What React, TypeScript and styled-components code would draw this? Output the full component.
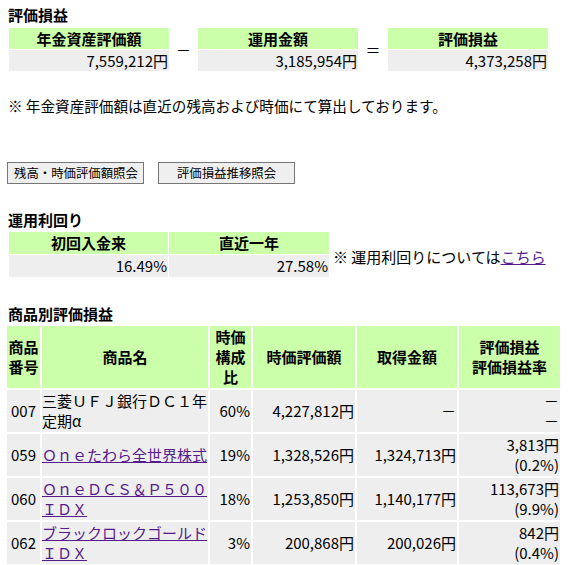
import React from "react";
import styled, { createGlobalStyle } from "styled-components";

const GlobalStyle = createGlobalStyle`
  html, body {
    margin: 0;
    padding: 0;
    background: #ffffff;
  }
  body {
    font-family: "Noto Sans CJK JP", "Noto Sans", sans-serif;
    font-size: 15px;
    color: #000000;
  }
`;

const GREEN = "#ccffaa";
const GRAY = "#eeeeee";

const Page = styled.div`
  padding: 5px 0 0 8px;
  width: 562px;
  box-sizing: border-box;
`;

const SectionTitle = styled.h2<{ $gap?: number }>`
  margin: ${(p) => p.$gap ?? 0}px 0 0 0;
  font-size: 15px;
  font-weight: bold;
  line-height: 20px;
`;

const FormulaTable = styled.table`
  border-collapse: separate;
  border-spacing: 1px;
  table-layout: fixed;
  margin-top: 2px;
`;

const HeadCell = styled.th<{ $w?: number }>`
  background: ${GREEN};
  font-weight: bold;
  text-align: center;
  padding: 0 1px;
  line-height: 21px;
  width: ${(p) => (p.$w ? `${p.$w - 2}px` : "auto")};
`;

const ValueCell = styled.td`
  background: ${GRAY};
  text-align: right;
  padding: 0 1px;
  line-height: 21px;
`;

const OpCell = styled.td<{ $w: number }>`
  width: ${(p) => p.$w}px;
  padding: 0;
  text-align: center;
  vertical-align: middle;
`;

const Note = styled.p`
  margin: 24px 0 0 0;
  font-size: 14.6px;
  line-height: 20px;
`;

const ButtonRow = styled.div`
  display: flex;
  gap: 14px;
  margin: 46px 0 0 -1px;
`;

const Button = styled.button`
  width: 137px;
  height: 22px;
  padding: 0 6px;
  box-sizing: border-box;
  background: #efefef;
  border: 1px solid #767676;
  border-radius: 0;
  font-family: "Noto Sans CJK JP", sans-serif;
  font-size: 12.4px;
  color: #000;
  line-height: 18px;
  white-space: nowrap;
`;

const YieldRow = styled.div`
  display: flex;
  align-items: center;
  gap: 3px;
  margin-top: 1px;
`;

const YieldTable = styled.table`
  border-collapse: separate;
  border-spacing: 1px;
  table-layout: fixed;
`;

const YieldHead = styled(HeadCell)`
  line-height: 22px;
`;

const YieldValue = styled(ValueCell)`
  line-height: 22px;
`;

const YieldNote = styled.span`
  line-height: 20px;
  margin-top: 4px;
`;

const Link = styled.a`
  color: #551a8b;
  text-decoration: underline;
`;

const ProductTable = styled.table`
  border-collapse: separate;
  border-spacing: 2px;
  table-layout: fixed;
  margin: 0 0 0 -3px;
`;

const PHead = styled.th<{ $w: number }>`
  width: ${(p) => p.$w - 2}px;
  background: ${GREEN};
  font-weight: bold;
  text-align: center;
  vertical-align: middle;
  padding: 1px;
  line-height: 20px;
`;

const PCell = styled.td<{ $align?: "left" | "right" | "center" }>`
  background: ${GRAY};
  text-align: ${(p) => p.$align ?? "right"};
  vertical-align: middle;
  padding: ${(p) => (p.$align === "left" ? "1px 0" : "1px")};
  line-height: 20px;
  word-break: break-all;
`;

type Product = {
  code: string;
  name: string;
  link: boolean;
  ratio: string;
  value: string;
  cost: string;
  gain: string;
  rate: string;
};

const products: Product[] = [
  {
    code: "007",
    name: "三菱ＵＦＪ銀行ＤＣ１年定期α",
    link: false,
    ratio: "60%",
    value: "4,227,812円",
    cost: "－",
    gain: "－",
    rate: "－",
  },
  {
    code: "059",
    name: "Ｏｎｅたわら全世界株式",
    link: true,
    ratio: "19%",
    value: "1,328,526円",
    cost: "1,324,713円",
    gain: "3,813円",
    rate: "(0.2%)",
  },
  {
    code: "060",
    name: "ＯｎｅＤＣＳ＆Ｐ５００ＩＤＸ",
    link: true,
    ratio: "18%",
    value: "1,253,850円",
    cost: "1,140,177円",
    gain: "113,673円",
    rate: "(9.9%)",
  },
  {
    code: "062",
    name: "ブラックロックゴールドＩＤＸ",
    link: true,
    ratio: "3%",
    value: "200,868円",
    cost: "200,026円",
    gain: "842円",
    rate: "(0.4%)",
  },
];

export default function App() {
  return (
    <>
      <GlobalStyle />
      <Page>
        <SectionTitle>評価損益</SectionTitle>
        <FormulaTable>
          <tbody>
            <tr>
              <HeadCell $w={160}>年金資産評価額</HeadCell>
              <OpCell $w={27} rowSpan={2}>－</OpCell>
              <HeadCell $w={160}>運用金額</HeadCell>
              <OpCell $w={28} rowSpan={2}>＝</OpCell>
              <HeadCell $w={160}>評価損益</HeadCell>
            </tr>
            <tr>
              <ValueCell>7,559,212円</ValueCell>
              <ValueCell>3,185,954円</ValueCell>
              <ValueCell>4,373,258円</ValueCell>
            </tr>
          </tbody>
        </FormulaTable>

        <Note>※ 年金資産評価額は直近の残高および時価にて算出しております。</Note>

        <ButtonRow>
          <Button type="button">残高・時価評価額照会</Button>
          <Button type="button">評価損益推移照会</Button>
        </ButtonRow>

        <SectionTitle $gap={26}>運用利回り</SectionTitle>
        <YieldRow>
          <YieldTable>
            <tbody>
              <tr>
                <YieldHead $w={159}>初回入金来</YieldHead>
                <YieldHead $w={160}>直近一年</YieldHead>
              </tr>
              <tr>
                <YieldValue>16.49%</YieldValue>
                <YieldValue>27.58%</YieldValue>
              </tr>
            </tbody>
          </YieldTable>
          <YieldNote>
            ※ 運用利回りについては<Link href="#">こちら</Link>
          </YieldNote>
        </YieldRow>

        <SectionTitle $gap={26}>商品別評価損益</SectionTitle>
        <ProductTable>
          <thead>
            <tr>
              <PHead $w={33}>商品番号</PHead>
              <PHead $w={166}>商品名</PHead>
              <PHead $w={41}>時価構成比</PHead>
              <PHead $w={102}>時価評価額</PHead>
              <PHead $w={100}>取得金額</PHead>
              <PHead $w={101}>
                評価損益
                <br />
                評価損益率
              </PHead>
            </tr>
          </thead>
          <tbody>
            {products.map((p) => (
              <tr key={p.code}>
                <PCell $align="center">{p.code}</PCell>
                <PCell $align="left">
                  {p.link ? <Link href="#">{p.name}</Link> : p.name}
                </PCell>
                <PCell>{p.ratio}</PCell>
                <PCell>{p.value}</PCell>
                <PCell>{p.cost}</PCell>
                <PCell>
                  {p.gain}
                  <br />
                  {p.rate}
                </PCell>
              </tr>
            ))}
          </tbody>
        </ProductTable>
      </Page>
    </>
  );
}
